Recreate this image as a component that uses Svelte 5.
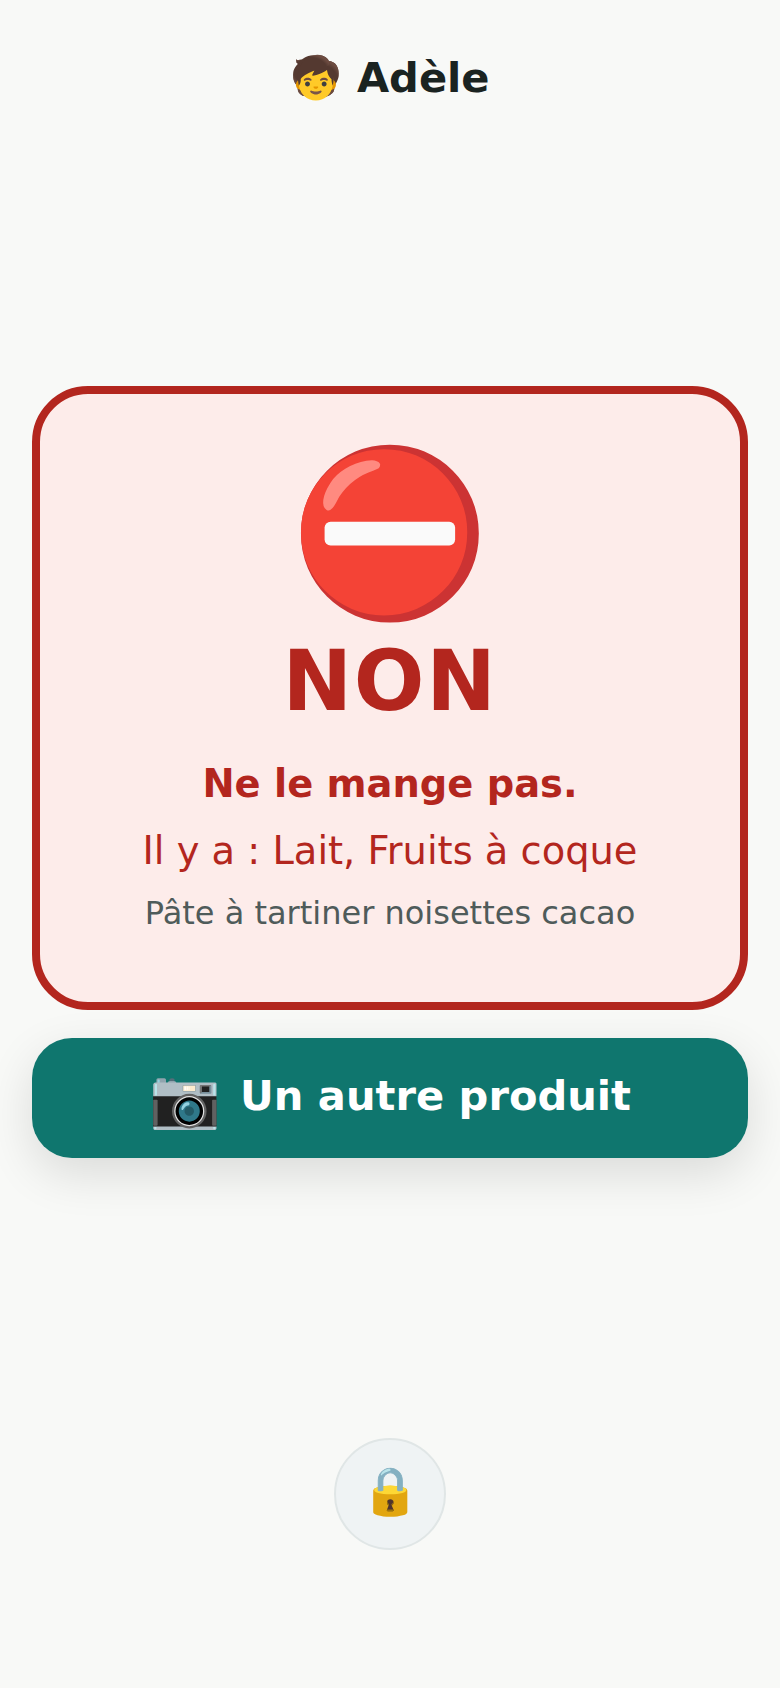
<script>
  const allergens = 'Lait, Fruits à coque';
</script>

<div class="page">
  <header class="who"><span class="emoji">🧒</span> Adèle</header>
  <main class="main">
    <section class="card">
      <div class="sign">⛔</div>
      <h1>NON</h1>
      <p class="advice">Ne le mange pas.</p>
      <p class="allergens">Il y a : {allergens}</p>
      <p class="product">Pâte à tartiner noisettes cacao</p>
    </section>
    <button class="again"><span class="cam">📷</span><span class="label">Un autre produit</span></button>
  </main>
  <footer class="foot"><button class="lock">🔒</button></footer>
</div>

<style>
  :global(body) {
    margin: 0;
    background: #f8f9f7;
    font-family: "DejaVu Sans", sans-serif;
  }
  .page {
    height: 1688px;
    box-sizing: border-box;
    display: flex;
    flex-direction: column;
    padding: 48px 32px 0;
  }
  .who {
    text-align: center;
    font-size: 41.6px;
    font-weight: 700;
    color: #1a2321;
    line-height: 60px;
  }
  .main {
    margin-top: 278px;
    display: flex;
    flex-direction: column;
    gap: 28px;
  }
  .card {
    box-sizing: border-box;
    height: 624px;
    border: 8px solid #b3261e;
    border-radius: 56px;
    background: #fdecea;
    display: flex;
    flex-direction: column;
    align-items: center;
    padding-top: 40px;
    text-align: center;
  }
  .sign { font-size: 162px; line-height: 198px; }
  h1 {
    margin: 2px 0 0;
    font-size: 83.2px;
    line-height: 96px;
    color: #b3261e;
    letter-spacing: 1.66px;
  }
  .advice { margin: 31px 0 0; font-size: 38.4px; font-weight: 700; color: #b3261e; }
  .allergens { margin: 22px 0 0; font-size: 38.4px; color: #b3261e; }
  .product { margin: 21px 0 0; font-size: 32px; color: #4f5b5a; }
  .again {
    height: 120px;
    border: 0;
    border-radius: 40px;
    background: #0f766e;
    color: #fff;
    font: 700 41.6px "DejaVu Sans", sans-serif;
    box-shadow: 0 16px 48px rgba(0,0,0,.12);
    display: flex;
    align-items: center;
    justify-content: center;
    gap: 19px;
  }
  .cam { font-size: 57.6px; }
  .label { margin-top: -6px; }
  .foot { margin-top: 280px; display: flex; justify-content: center; }
  .lock {
    width: 112px; height: 112px;
    border-radius: 50%;
    border: 2px solid #e0e6e6;
    background: #eff3f4;
    font-size: 47px;
    padding: 0 0 7px;
  }
</style>
